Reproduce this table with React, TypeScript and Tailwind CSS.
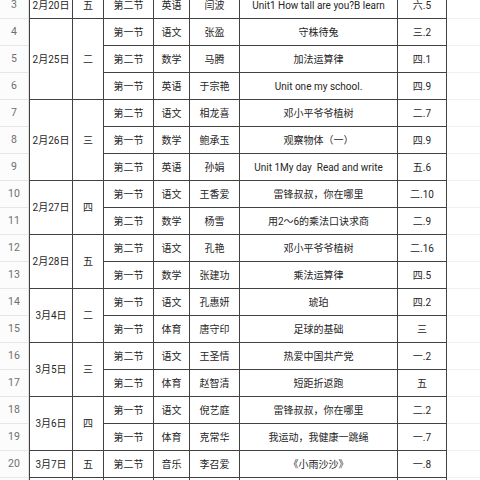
import React from "react";

type Row = [string, string, string, string, string];
type Group = { date: string; wd: string; rows: Row[] };

const groups: Group[] = [
  { date: "2月20日", wd: "五", rows: [["第二节", "英语", "闫波", "Unit1 How tall are you?B learn", "六.5"]] },
  {
    date: "2月25日",
    wd: "二",
    rows: [
      ["第一节", "语文", "张盈", "守株待兔", "三.2"],
      ["第二节", "数学", "马腾", "加法运算律", "四.1"],
      ["第一节", "英语", "于宗艳", "Unit one my school.", "四.9"],
    ],
  },
  {
    date: "2月26日",
    wd: "三",
    rows: [
      ["第二节", "语文", "相龙喜", "邓小平爷爷植树", "二.7"],
      ["第一节", "数学", "鲍承玉", "观察物体（一）", "四.9"],
      ["第二节", "英语", "孙娟", "Unit 1My day\u00a0\u00a0Read and write", "五.6"],
    ],
  },
  {
    date: "2月27日",
    wd: "四",
    rows: [
      ["第一节", "语文", "王香爱", "雷锋叔叔，你在哪里", "二.10"],
      ["第二节", "数学", "杨雪", "用2～6的乘法口诀求商", "二.9"],
    ],
  },
  {
    date: "2月28日",
    wd: "五",
    rows: [
      ["第二节", "语文", "孔艳", "邓小平爷爷植树", "二.16"],
      ["第一节", "数学", "张建功", "乘法运算律", "四.5"],
    ],
  },
  {
    date: "3月4日",
    wd: "二",
    rows: [
      ["第一节", "语文", "孔惠妍", "琥珀", "四.2"],
      ["第一节", "体育", "唐守印", "足球的基础", "三"],
    ],
  },
  {
    date: "3月5日",
    wd: "三",
    rows: [
      ["第二节", "语文", "王圣情", "热爱中国共产党", "一.2"],
      ["第二节", "体育", "赵智清", "短距折返跑", "五"],
    ],
  },
  {
    date: "3月6日",
    wd: "四",
    rows: [
      ["第一节", "语文", "倪艺庭", "雷锋叔叔，你在哪里", "二.2"],
      ["第一节", "体育", "克常华", "我运动，我健康一跳绳", "一.7"],
    ],
  },
  { date: "3月7日", wd: "五", rows: [["第二节", "音乐", "李召爱", "《小雨沙沙》", "一.8"]] },
  { date: "", wd: "", rows: [["", "", "", "", ""]] },
];

const span = (n: number) => (n === 3 ? "row-span-3" : n === 2 ? "row-span-2" : "row-span-1");

const nums = Array.from({ length: 19 }, (_, i) => i + 3);

export default function App() {
  const cells: React.ReactNode[] = [];
  groups.forEach((g, gi) => {
    cells.push(
      <div key={`d${gi}`} className={`${span(g.rows.length)} bg-white flex items-center justify-center`}>
        {g.date}
      </div>
    );
    cells.push(
      <div key={`w${gi}`} className={`${span(g.rows.length)} bg-white flex items-center justify-center`}>
        {g.wd}
      </div>
    );
    g.rows.forEach((r, ri) => {
      r.forEach((c, ci) => {
        cells.push(
          <div key={`c${gi}-${ri}-${ci}`} className="bg-white flex items-center justify-center whitespace-nowrap">
            {c}
          </div>
        );
      });
    });
  });

  return (
    <div
      className="w-[480px] h-[480px] overflow-hidden bg-white text-[10px] text-[#262626]"
      style={{ fontFamily: "Roboto, 'Noto Sans CJK SC', sans-serif" }}
    >
      <div className="flex mt-[-9px]">
        <div className="w-[29px] flex flex-col bg-[#fcfcfc] border-r border-[#e2e2e2]">
          {nums.map((n) => (
            <div
              key={n}
              className="h-[27px] border-t border-[#e6e6e6] flex items-center justify-center text-[#6f6f6f] text-[10.5px]"
            >
              {n}
            </div>
          ))}
        </div>
        <div className="grid grid-cols-[42px_30px_49px_35px_49px_157px_48px] auto-rows-[26px] gap-px bg-[#424242] p-px self-start">
          {cells}
        </div>
        <div className="flex-1 flex flex-col">
          {nums.map((n) => (
            <div key={n} className="h-[27px] border-t border-[#f0f0f0]" />
          ))}
        </div>
      </div>
    </div>
  );
}
